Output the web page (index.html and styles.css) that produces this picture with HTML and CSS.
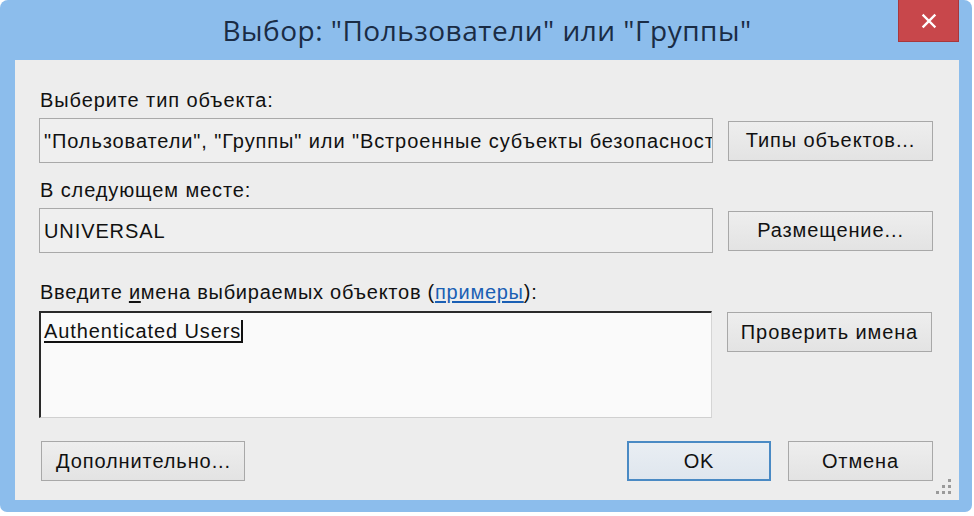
FILE: index.html
```html
<!DOCTYPE html>
<html lang="ru">
<head>
<meta charset="utf-8">
<title>Выбор: "Пользователи" или "Группы"</title>
<link rel="stylesheet" href="styles.css">
</head>
<body>
<div class="window">
  <div class="titlebar">
    <div class="title">Выбор: "Пользователи" или "Группы"</div>
    <div class="close">
      <svg width="16" height="16" viewBox="0 0 16 16"><path d="M2.5 2.5 L13.5 13.5 M13.5 2.5 L2.5 13.5" stroke="#fff" stroke-width="2.4" stroke-linecap="square"/></svg>
    </div>
  </div>
  <div class="client">
    <div class="label first">Выберите тип объекта:</div>
    <div class="row">
      <div class="field">"Пользователи", "Группы" или "Встроенные субъекты безопасности"</div>
      <div class="btn">Типы объектов...</div>
    </div>
    <div class="label second">В следующем месте:</div>
    <div class="row">
      <div class="field">UNIVERSAL</div>
      <div class="btn">Размещение...</div>
    </div>
    <div class="label third">Введите <u>и</u>мена выбираемых объектов (<a class="link" href="#">примеры</a>):</div>
    <div class="row top">
      <div class="names"><span class="entry">Authenticated Users</span><span class="caret"></span></div>
      <div class="btn check">Проверить имена</div>
    </div>
    <div class="bottom">
      <div class="btn extra">Дополнительно...</div>
      <div class="spacer"></div>
      <div class="btn ok">OK</div>
      <div class="btn cancel">Отмена</div>
    </div>
    <div class="grip">
      <i style="right:2px;bottom:2px"></i><i style="right:8px;bottom:2px"></i><i style="right:14px;bottom:2px"></i>
      <i style="right:2px;bottom:8px"></i><i style="right:8px;bottom:8px"></i>
      <i style="right:2px;bottom:14px"></i>
    </div>
  </div>
</div>
</body>
</html>
```

FILE: styles.css
```css
* { box-sizing: border-box; }
html, body { margin: 0; padding: 0; background: #ffffff; }
body {
  width: 974px;
  height: 516px;
  overflow: hidden;
  font-family: "Liberation Sans", Arial, sans-serif;
  color: #111;
}
.window {
  width: 972px;
  height: 512px;
  background: #8cbdec;
  border-radius: 8px 8px 7px 7px;
  padding: 0 13px 12px 15px;
  display: flex;
  flex-direction: column;
}
.titlebar {
  height: 60px;
  display: grid;
  grid-template-columns: 1fr auto 1fr;
}
.title {
  grid-column: 2;
  align-self: center;
  margin-top: -1px;
  font-family: "Open Sans", "DejaVu Sans", sans-serif;
  font-size: 28px;
  line-height: 34px;
  color: #1a2c45;
  letter-spacing: 0.5px;
  white-space: nowrap;
}
.close {
  grid-column: 3;
  justify-self: end;
  align-self: start;
  width: 61px;
  height: 42px;
  background: #c8474b;
  border: 1px solid #a8373b;
  border-top: none;
  display: flex;
  align-items: center;
  justify-content: center;
}
.client {
  position: relative;
  flex: 1;
  background: #ededed;
  padding: 29px 26px 19px 24px;
  display: flex;
  flex-direction: column;
}
.label, .field, .btn, .names {
  font-size: 20px;
  letter-spacing: 0.9px;
}
.label {
  line-height: 22px;
  padding-left: 1px;
  color: #111;
  white-space: nowrap;
}
.label.third { letter-spacing: 0.75px; }
.label.first { margin-bottom: 7px; }
.label.second { margin-top: 16px; margin-bottom: 7px; }
.label.third { margin-top: 28px; margin-bottom: 8px; }
.label u { text-decoration: underline; text-underline-offset: 2px; }
.link { color: #1a5fb4; text-decoration: underline; text-underline-offset: 2px; }
.row {
  display: flex;
  align-items: center;
  gap: 15px;
}
.row.top { align-items: flex-start; }
.field {
  width: 674px;
  height: 45px;
  background: #efefef;
  border: 1px solid #a9a9a9;
  padding: 11px 4px 0 4px;
  line-height: 22px;
  white-space: nowrap;
  overflow: hidden;
}
.btn {
  width: 205px;
  height: 40px;
  background: linear-gradient(#eeeeee, #e3e3e3);
  border: 1px solid #a8a8a8;
  display: flex;
  align-items: center;
  justify-content: center;
  color: #111;
  white-space: nowrap;
}
.btn.check { margin-top: 1px; }
.names {
  width: 673px;
  height: 107px;
  background: #fafafa;
  border-top: 2px solid #2a2a2a;
  border-left: 2px solid #2a2a2a;
  border-right: 1px solid #d5d5d5;
  border-bottom: 1px solid #d0d0d0;
  padding: 7px 3px;
  line-height: 22px;
  display: flex;
  align-items: flex-start;
}
.entry {
  text-decoration: underline;
  text-underline-offset: 3px;
  text-decoration-thickness: 1.5px;
}
.caret {
  display: inline-block;
  width: 2px;
  height: 23px;
  margin-left: 0;
  background: #111;
}
.bottom {
  margin-top: 23px;
  display: flex;
  align-items: center;
}
.btn.extra { width: 204px; margin-left: 2px; justify-content: flex-start; padding-left: 14px; }
.spacer { flex: 1; }
.btn.ok {
  width: 144px;
  background: linear-gradient(#e9eef3, #dfe6ee);
  border: 2px solid #4a8ac4;
  margin-right: 17px;
}
.btn.cancel { width: 145px; }
.grip {
  position: absolute;
  right: 6px;
  bottom: 4px;
  width: 18px;
  height: 18px;
}
.grip i {
  position: absolute;
  width: 3px;
  height: 3px;
  background: #9a9a9a;
}
```
